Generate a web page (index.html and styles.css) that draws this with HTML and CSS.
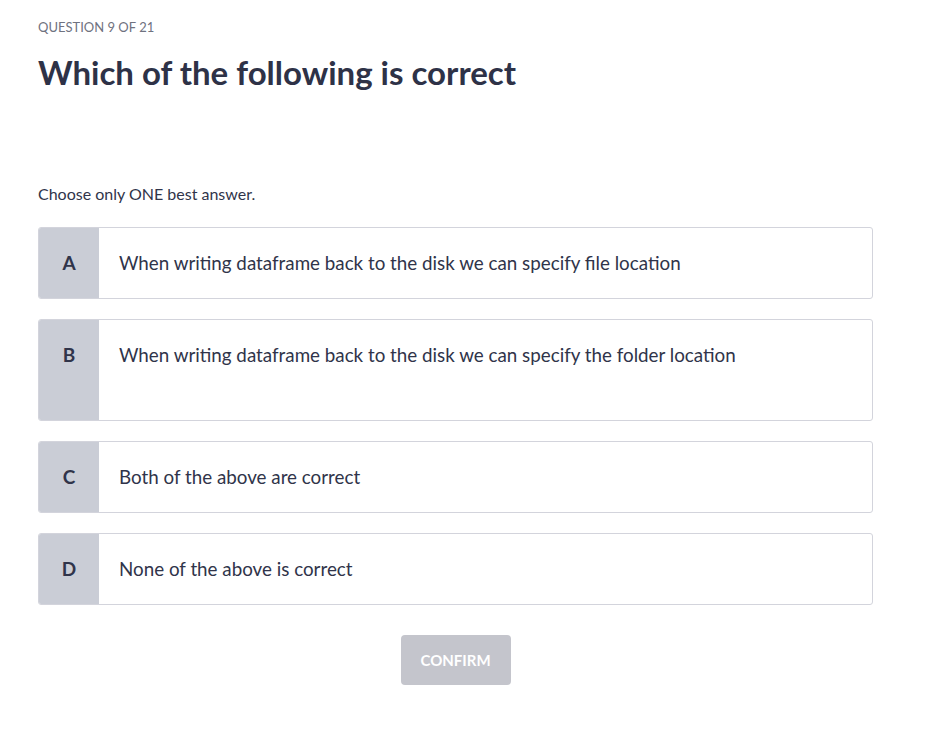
FILE: index.html
```html
<!DOCTYPE html>
<html>
<head>
<meta charset="utf-8">
<link rel="stylesheet" href="styles.css">
</head>
<body>
<div class="quiz">
  <div class="counter">QUESTION 9 OF 21</div>
  <h1 class="title">Which of the following is correct</h1>
  <p class="instruction">Choose only ONE best answer.</p>
  <div class="options">
    <div class="option"><div class="letter">A</div><div class="text">When writing dataframe back to the disk we can specify file location</div></div>
    <div class="option tall"><div class="letter">B</div><div class="text">When writing dataframe back to the disk we can specify the folder location</div></div>
    <div class="option"><div class="letter">C</div><div class="text">Both of the above are correct</div></div>
    <div class="option"><div class="letter">D</div><div class="text">None of the above is correct</div></div>
  </div>
  <div class="actions"><button class="confirm">CONFIRM</button></div>
</div>
</body>
</html>
```
FILE: styles.css
```css
body {
  margin: 0;
  background: #ffffff;
  font-family: "Lato", "Noto Sans", sans-serif;
  color: #30344a;
}
.quiz {
  width: 835px;
  padding: 18px 0 0 38px;
}
.counter {
  font-size: 13px;
  line-height: 18px;
  color: #6f7280;
}
.title {
  margin: 16px 0 0 0;
  font-size: 33px;
  line-height: 40px;
  font-weight: 700;
  color: #2e3247;
}
.instruction {
  margin: 91px 0 0 0;
  font-size: 16px;
  line-height: 22px;
  color: #30344a;
}
.options {
  margin-top: 22px;
  display: flex;
  flex-direction: column;
  gap: 20px;
}
.option {
  display: flex;
  min-height: 70px;
  border: 1px solid #d3d4dc;
  border-radius: 3px;
  overflow: hidden;
}
.option.tall {
  min-height: 100px;
}
.letter {
  width: 60px;
  flex: none;
  background: #cacdd6;
  text-align: center;
  font-weight: 700;
  font-size: 19px;
  line-height: 22px;
  padding-top: 24px;
  color: #30344a;
}
.text {
  padding: 24px 20px 0 20px;
  font-size: 18.8px;
  line-height: 22px;
}
.actions {
  display: flex;
  justify-content: center;
  margin-top: 30px;
}
.confirm {
  width: 110px;
  height: 50px;
  border: none;
  border-radius: 4px;
  background: #c4c5cc;
  color: #ffffff;
  font-family: "Lato", "Noto Sans", sans-serif;
  font-weight: 700;
  font-size: 15px;
}
```
